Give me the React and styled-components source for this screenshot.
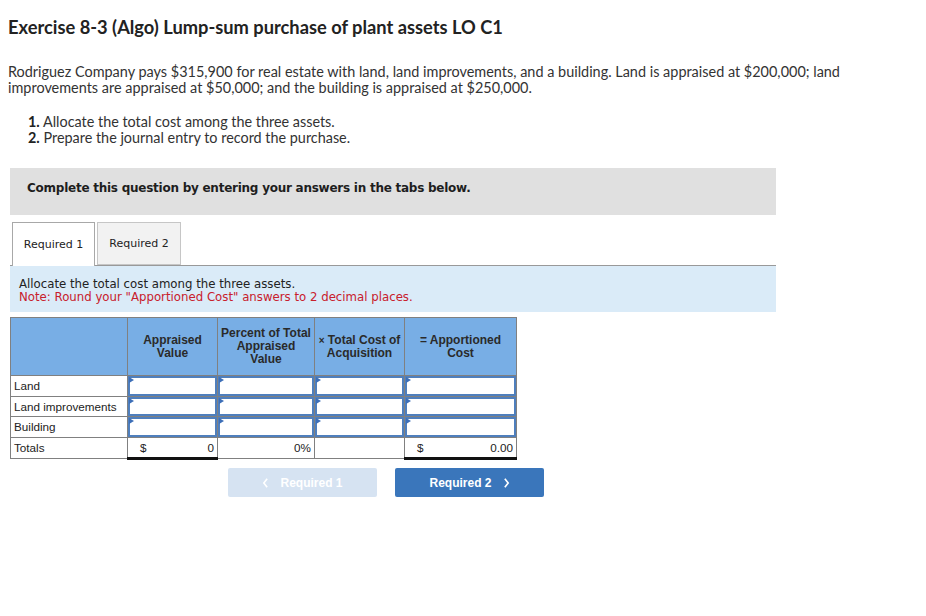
import React from 'react';
import styled, { createGlobalStyle } from 'styled-components';

const GlobalStyle = createGlobalStyle`
  body {
    margin: 0;
    background: #ffffff;
    font-family: 'Lato', 'Liberation Sans', sans-serif;
  }
`;

const rows = ['Land', 'Land improvements', 'Building'];

const App = () => {
  return (
    <Page>
      <GlobalStyle />
      <Title>Exercise 8-3 (Algo) Lump-sum purchase of plant assets LO C1</Title>
      <Intro>
        Rodriguez Company pays $315,900 for real estate with land, land improvements, and a building. Land is appraised at $200,000; land
        improvements are appraised at $50,000; and the building is appraised at $250,000.
      </Intro>
      <Steps>
        <li><b>1.</b> Allocate the total cost among the three assets.</li>
        <li><b>2.</b> Prepare the journal entry to record the purchase.</li>
      </Steps>
      <Banner>Complete this question by entering your answers in the tabs below.</Banner>
      <Tabs>
        <Tab active>Required 1</Tab>
        <Tab>Required 2</Tab>
      </Tabs>
      <Instructions>
        <div>Allocate the total cost among the three assets.</div>
        <Note>Note: Round your "Apportioned Cost" answers to 2 decimal places.</Note>
      </Instructions>
      <Grid>
        <colgroup>
          <col style={{ width: 117 }} />
          <col style={{ width: 90 }} />
          <col style={{ width: 97 }} />
          <col style={{ width: 90 }} />
          <col style={{ width: 112 }} />
        </colgroup>
        <thead>
          <tr>
            <Head />
            <Head>Appraised<br />Value</Head>
            <Head>Percent of Total<br />Appraised<br />Value</Head>
            <Head><Sign>×</Sign> Total Cost of<br />Acquisition</Head>
            <Head>= Apportioned<br />Cost</Head>
          </tr>
        </thead>
        <tbody>
          {rows.map((r) => (
            <tr key={r}>
              <Label>{r}</Label>
              {[0, 1, 2, 3].map((i) => (
                <InputCell key={i}>
                  <Input />
                </InputCell>
              ))}
            </tr>
          ))}
          <tr>
            <Label>Totals</Label>
            <Total strong>
              <Money><span>$</span><span>0</span></Money>
            </Total>
            <Total>
              <Money><span /><span>0%</span></Money>
            </Total>
            <Total />
            <Total strong>
              <Money><span>$</span><span>0.00</span></Money>
            </Total>
          </tr>
        </tbody>
      </Grid>
      <Nav>
        <NavButton disabled>
          <Chevron viewBox="0 0 8 12"><path d="M6 1 L2 6 L6 11" /></Chevron>
          Required 1
        </NavButton>
        <NavButton>
          Required 2
          <Chevron viewBox="0 0 8 12"><path d="M2 1 L6 6 L2 11" /></Chevron>
        </NavButton>
      </Nav>
    </Page>
  );
};

export default App;

const Page = styled.div`
  padding: 0 8px 40px;
  color: #222;
`;

const Title = styled.h1`
  margin: 17px 0 0;
  font-size: 18.3px;
  line-height: 20px;
  font-weight: 700;
  color: #222;
`;

const Intro = styled.p`
  margin: 27px 0 0;
  width: 850px;
  font-size: 14.45px;
  line-height: 16px;
  color: #333;
`;

const Steps = styled.ul`
  margin: 18px 0 0;
  padding: 0 0 0 20px;
  list-style: none;
  font-size: 14.4px;
  line-height: 16px;
  color: #333;
  b {
    font-weight: 700;
    color: #222;
  }
`;

const Banner = styled.div`
  margin: 22px 0 0 2px;
  width: 766px;
  height: 47px;
  box-sizing: border-box;
  padding: 13px 0 0 17px;
  background: #e0e0e0;
  font-family: 'DejaVu Sans', Verdana, sans-serif;
  font-size: 12px;
  letter-spacing: -0.25px;
  font-weight: 700;
  color: #1e1e1e;
`;

const Tabs = styled.div`
  display: flex;
  gap: 2px;
  margin: 7px 0 0 4px;
  position: relative;
  z-index: 1;
`;

const Tab = styled.div`
  width: ${(p) => (p.active ? 83 : 84)}px;
  height: ${(p) => (p.active ? 44 : 43)}px;
  box-sizing: border-box;
  display: flex;
  align-items: center;
  justify-content: center;
  background: ${(p) => (p.active ? '#ffffff' : '#f2f2f2')};
  border: 1px solid ${(p) => (p.active ? '#a8a8a8' : '#c6c6c6')};
  border-bottom: ${(p) => (p.active ? 'none' : '1px solid #c6c6c6')};
  font-family: 'DejaVu Sans', Verdana, sans-serif;
  font-size: 11px;
  color: #222;
`;

const Instructions = styled.div`
  margin: -1px 0 0 2px;
  width: 766px;
  height: 47px;
  box-sizing: border-box;
  padding: 12px 0 0 9px;
  background: #daebf8;
  border-top: 1px solid #999;
  font-family: 'DejaVu Sans', Verdana, sans-serif;
  font-size: 11.75px;
  line-height: 13px;
  color: #222;
`;

const Note = styled.div`
  color: #c8202c;
`;

const Grid = styled.table`
  margin: 5px 0 0 2px;
  border-collapse: collapse;
  table-layout: fixed;
  width: 507px;
  font-family: 'Liberation Sans', Arial, sans-serif;
  font-size: 11.7px;
  color: #222;
`;

const Head = styled.th`
  height: 57px;
  padding: 0 2px;
  background: #78aee5;
  border: 1px solid #808080;
  font-weight: 700;
  font-size: 12px;
  line-height: 13px;
  color: #2a2a2a;
  text-align: center;
  vertical-align: middle;
`;

const Sign = styled.span`
  font-size: 10px;
`;

const Label = styled.td`
  height: 19.5px;
  padding: 0 3px;
  border: 1px solid #808080;
  white-space: nowrap;
  text-align: left;
`;

const InputCell = styled.td`
  padding: 0;
  border: 1px solid #808080;
`;

const Input = styled.div`
  position: relative;
  height: 19.5px;
  box-sizing: border-box;
  border: 2px solid #4f7fbd;
  background: #fff;
  &::before {
    content: '';
    position: absolute;
    left: -1px;
    top: -1px;
    border-left: 5px solid #3d6fb8;
    border-top: 3px solid transparent;
    border-bottom: 3px solid transparent;
  }
`;

const Total = styled.td`
  height: 19.5px;
  padding: 0 3px 0 12px;
  border: 1px solid #808080;
  ${(p) => p.strong && 'border-top: 1px solid #111; border-bottom: 3px solid #111;'}
`;

const Money = styled.div`
  display: flex;
  justify-content: space-between;
`;

const Nav = styled.div`
  display: flex;
  gap: 18px;
  margin: 8px 0 0 220px;
`;

const NavButton = styled.button`
  width: 149px;
  height: 29px;
  display: flex;
  align-items: center;
  justify-content: center;
  gap: 11px;
  border: none;
  border-radius: 2px;
  background: ${(p) => (p.disabled ? '#d6e3f2' : '#3a76bb')};
  color: #fff;
  font-family: 'Liberation Sans', Arial, sans-serif;
  font-size: 12px;
  font-weight: 700;
`;

const Chevron = styled.svg`
  width: 7px;
  height: 10px;
  fill: none;
  stroke: #fff;
  stroke-width: 2;
`;
